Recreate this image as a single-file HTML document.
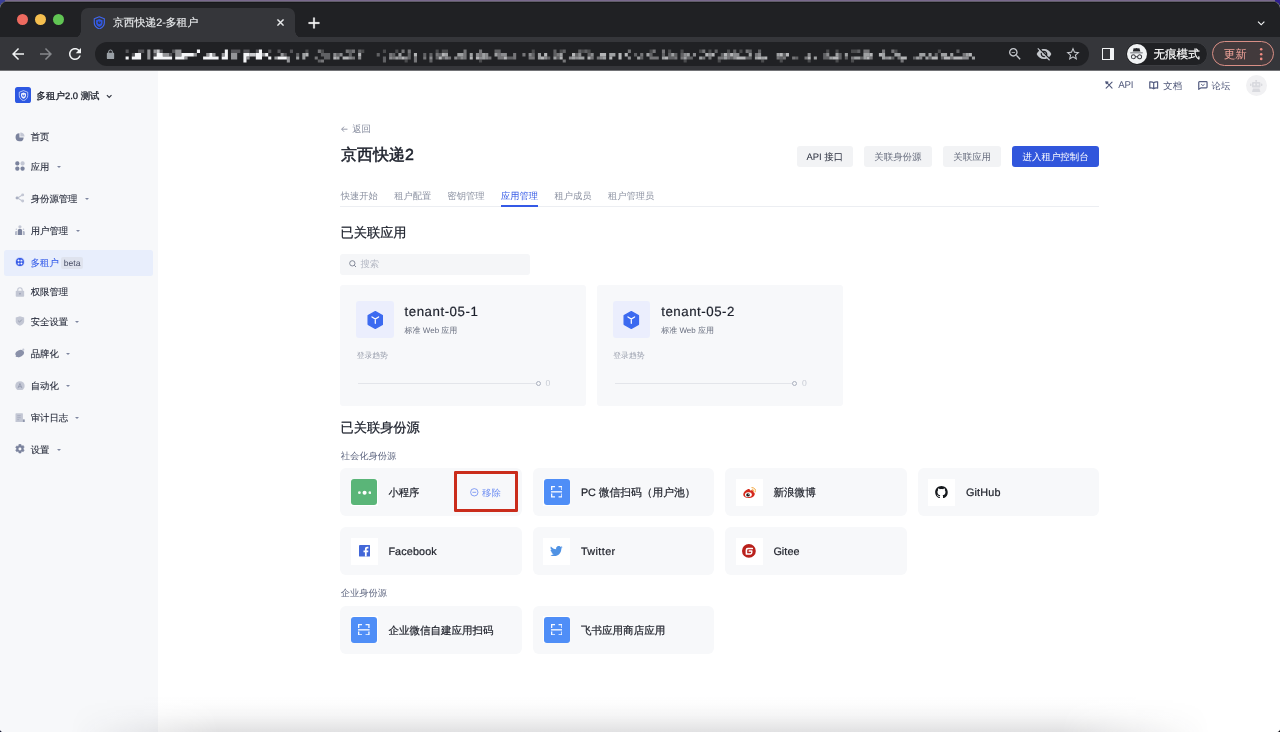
<!DOCTYPE html>
<html lang="zh">
<head>
<meta charset="utf-8">
<title>京西快递2-多租户</title>
<style>
*{box-sizing:border-box;margin:0;padding:0}
html,body{width:1280px;height:732px;overflow:hidden}
body{position:relative;text-rendering:geometricPrecision;background:#79698d;font-family:"Liberation Sans",sans-serif;color:#282d3c}
.abs{position:absolute}
.t{position:absolute;white-space:nowrap;line-height:1}
#win{will-change:transform;box-shadow:0 -.8px 0 #58595d;position:absolute;left:0;top:2px;width:1280px;height:730px;background:#fff;border-radius:6px 6px 4px 4px;overflow:hidden}
#strip{position:absolute;left:0;top:0;width:1280px;height:36px;background:#202124;border-top:.8px solid #17181a}
#tool{position:absolute;left:0;top:35px;width:1280px;height:33px;background:#35363a}
#tab{position:absolute;left:80.500px;top:5.500px;width:214.500px;height:30.500px;background:#35363a;border-radius:7px 7px 0 0}
#tab:before,#tab:after{content:"";position:absolute;bottom:0;width:7px;height:7px;background:radial-gradient(circle at 0 0,rgba(53,54,58,0) 6.5px,#35363a 7px)}
#tab:before{left:-7px}
#tab:after{right:-7px;transform:scaleX(-1)}
.dot{position:absolute;margin-left:.3px;top:12px;width:11px;height:11px;border-radius:50%}
#url{position:absolute;left:95px;top:39.500px;width:993.500px;height:24.500px;border-radius:12.500px;background:#202124}
#page{position:absolute;left:0;top:68px;width:1280px;height:662px;background:#fff}
#side{position:absolute;left:0;top:0;width:158px;height:662px;background:#f7f8fa}
.mi{position:absolute;margin-top:.1px;left:30.700px;font-size:9.350px;-webkit-text-stroke:.12px;color:#282d3c;white-space:nowrap;line-height:12px;height:12px}
.car{position:absolute;width:0;height:0;border-left:2.400px solid transparent;border-right:2.400px solid transparent;border-top:2.800px solid #7f869f}
.ic{position:absolute;margin-top:-.3px;left:15px;width:9.900px;height:9.900px}
.btn{position:absolute;top:75.700px;height:21.500px;border-radius:3px;background:#f2f3f5;font-size:9.450px;line-height:21.200px;padding-top:.9px;text-align:center;color:#676d7e;white-space:nowrap}
.tab{position:absolute;top:119.900px;font-size:9.250px;line-height:12px;color:#8a90a0;white-space:nowrap}
.h2{position:absolute;margin-top:.7px;left:340.600px;font-size:13.200px;font-weight:500;-webkit-text-stroke:.25px #1d212c;color:#1d212c;line-height:16px;white-space:nowrap}
.sub{position:absolute;left:340.800px;font-size:9.250px;color:#5f6781;line-height:12px;white-space:nowrap}
.app{position:absolute;top:215.100px;width:245.500px;height:121px;background:#f7f8fa;border-radius:3px}
.idp{position:absolute;width:181.600px;height:48px;background:#f7f8fa;border-radius:6px}
.idp .ib{position:absolute;left:10.300px;top:10.400px;width:27px;height:27px;background:#fff}
.idp .ib i{position:absolute;left:.600px;top:.600px;right:.600px;bottom:.600px;border-radius:3px}
.idp .nm{position:absolute;left:48.100px;top:17.900px;font-size:10.350px;line-height:14px;color:#23262f;font-weight:500;-webkit-text-stroke:.22px #23262f;white-space:nowrap}
</style>
</head>
<body>
<div class="abs" style="left:0;top:0;width:5px;height:5px;background:#3a3f9a"></div><div class="abs" style="right:0;top:0;width:5px;height:5px;background:#2e1f8f"></div><div class="abs" style="left:0;bottom:0;width:6px;height:6px;background:#1c1f38"></div><div class="abs" style="right:0;bottom:0;width:6px;height:6px;background:#0e0e16"></div>
<div id="win">

  <div id="strip"></div>
  <div id="tool"></div>
  <div id="tab"></div>
  <div class="dot" style="left:16.500px;background:#ee6a5f"></div>
  <div class="dot" style="left:34.500px;background:#f5bf4f"></div>
  <div class="dot" style="left:52.500px;background:#61c554"></div>
  <div class="t" style="left:113px;top:15.200px;font-size:10.800px;color:#eceef0;line-height:12px;font-weight:500;-webkit-text-stroke:.15px #eceef0">京西快递2-多租户</div>
  <svg class="abs" style="left:92.500px;top:13.800px" width="12.600" height="13.500" viewBox="0 0 14 15"><path d="M7 .8 12.600 3.100v4.400c0 3.300-2.300 5.600-5.600 6.900C3.700 13.100 1.400 10.800 1.400 7.500V3.100z" fill="none" stroke="#3f66f0" stroke-width="1.300" stroke-linejoin="round"/><path d="M7 3.300 10.600 4.700v3c0 2.100-1.500 3.600-3.600 4.500-2.100-.9-3.600-2.400-3.600-4.500v-3z" fill="#2f56e0"/><circle cx="7" cy="7.300" r="1.700" fill="#35363a"/><rect x="6.500" y="5" width="1" height="2.400" fill="#2f56e0"/></svg>
  <svg class="abs" style="left:275px;top:14.700px" width="11" height="11" viewBox="0 0 24 24" fill="#f1f3f4" stroke="#f1f3f4" stroke-width="1.200"><path d="M19 6.410 17.590 5 12 10.590 6.410 5 5 6.410 10.590 12 5 17.590 6.410 19 12 13.410 17.590 19 19 17.590 13.410 12z"/></svg>
  <svg class="abs" style="left:306.300px;top:12.700px" width="16" height="16" viewBox="0 0 24 24" fill="#fff" stroke="#fff" stroke-width=".6"><path d="M20 13h-7v7h-2v-7H4v-2h7V4h2v7h7z"/></svg>
  <svg class="abs" style="left:1254px;top:13.500px" width="14.400" height="14.400" viewBox="0 0 24 24" fill="#f1f3f4"><path d="M16.590 8.590 12 13.170 7.410 8.590 6 10l6 6 6-6z"/></svg>
  <svg class="abs" style="left:8.800px;top:42.600px" width="18" height="18" viewBox="0 0 24 24" fill="#f1f3f4"><path d="M20 11H7.830l5.590-5.590L12 4l-8 8 8 8 1.410-1.410L7.830 13H20z"/></svg>
  <svg class="abs" style="left:37.400px;top:42.600px" width="18" height="18" viewBox="0 0 24 24" fill="#86888c"><path d="M12 4l-1.410 1.410L16.170 11H4v2h12.170l-5.580 5.590L12 20l8-8z"/></svg>
  <svg class="abs" style="left:66px;top:42.900px" width="18" height="18" viewBox="0 0 24 24" fill="#f1f3f4"><path d="M17.650 6.350C16.200 4.900 14.210 4 12 4c-4.420 0-7.990 3.580-7.990 8s3.570 8 7.990 8c3.730 0 6.840-2.550 7.730-6h-2.080c-.820 2.330-3.040 4-5.650 4-3.310 0-6-2.690-6-6s2.690-6 6-6c1.660 0 3.140.690 4.220 1.780L13 11h7V4z"/></svg>
  <div id="url">
    <svg class="abs" style="left:9.600px;top:7.300px" width="11" height="11" viewBox="0 0 24 24" fill="#9aa0a6"><path d="M18 8h-1V6c0-2.760-2.240-5-5-5S7 3.240 7 6v2H6c-1.100 0-2 .9-2 2v10c0 1.100.9 2 2 2h12c1.100 0 2-.9 2-2V10c0-1.100-.9-2-2-2zM9 6c0-1.660 1.340-3 3-3s3 1.340 3 3v2H9z"/></svg>
    <svg class="abs" style="left:0;top:0" width="994" height="25" viewBox="0 0 994 25" fill="#f4f5f7"><path fill-opacity="0.2" d="M210.4 7.5h3.1v3.5h-3.1zM225.9 7.5h3.1v3.5h-3.1zM266.2 7.5h3.1v3.5h-3.1zM287.9 7.5h3.1v3.5h-3.1zM300.3 7.5h3.1v3.5h-3.1zM309.6 17.5h3.1v3.1h-3.1zM340.6 7.5h3.1v3.5h-3.1zM346.8 7.5h3.1v3.5h-3.1zM349.9 7.5h3.1v3.5h-3.1zM384.0 17.5h3.1v3.1h-3.1zM436.7 7.5h3.1v3.5h-3.1zM464.6 7.5h3.1v3.5h-3.1zM486.3 7.5h3.1v3.5h-3.1zM492.5 7.5h3.1v3.5h-3.1zM554.5 7.5h3.1v3.5h-3.1zM573.1 7.5h3.1v3.5h-3.1zM585.5 7.5h3.1v3.5h-3.1zM588.6 17.5h3.1v3.1h-3.1zM604.1 7.5h3.1v3.5h-3.1zM613.4 7.5h3.1v3.5h-3.1zM622.7 17.5h3.1v3.1h-3.1zM632.0 7.5h3.1v3.5h-3.1zM644.4 7.5h3.1v3.5h-3.1zM666.1 17.5h3.1v3.1h-3.1zM684.7 17.5h3.1v3.1h-3.1zM712.6 17.5h3.1v3.1h-3.1zM731.2 7.5h3.1v3.5h-3.1zM740.5 7.5h3.1v3.5h-3.1zM740.5 17.5h3.1v3.1h-3.1zM756.0 7.5h3.1v3.5h-3.1zM756.0 17.5h3.1v3.1h-3.1zM759.1 7.5h3.1v3.5h-3.1zM799.4 7.5h3.1v3.5h-3.1zM842.8 7.5h3.1v3.5h-3.1z"/><path fill-opacity="0.25" d="M30.6 7.5h3.1v3.5h-3.1zM36.8 11.0h3.1v3.5h-3.1zM43.0 7.5h3.1v3.5h-3.1zM46.1 7.5h3.1v3.5h-3.1zM58.5 11.0h3.1v3.5h-3.1zM64.7 7.5h3.1v3.5h-3.1zM74.0 11.0h3.1v3.5h-3.1zM77.1 7.5h3.1v3.5h-3.1zM136.0 7.5h3.1v3.5h-3.1zM139.1 7.5h3.1v3.5h-3.1zM142.2 7.5h3.1v3.5h-3.1zM148.4 7.5h3.1v3.5h-3.1zM151.5 7.5h3.1v3.5h-3.1zM160.8 7.5h3.1v3.5h-3.1zM173.2 7.5h3.1v3.5h-3.1zM182.5 7.5h3.1v3.5h-3.1zM188.7 11.0h3.1v3.5h-3.1zM194.9 7.5h3.1v3.5h-3.1z"/><path fill-opacity="0.3" d="M201.1 11.0h3.1v3.5h-3.1zM222.8 17.5h3.1v3.1h-3.1zM225.9 11.0h3.1v3.5h-3.1zM229.0 11.0h3.1v3.5h-3.1zM229.0 14.5h3.1v3.1h-3.1zM232.1 11.0h3.1v3.5h-3.1zM232.1 14.5h3.1v3.1h-3.1zM241.4 11.0h3.1v3.5h-3.1zM253.8 7.5h3.1v3.5h-3.1zM253.8 11.0h3.1v3.5h-3.1zM263.1 7.5h3.1v3.5h-3.1zM281.7 11.0h3.1v3.5h-3.1zM287.9 14.5h3.1v3.1h-3.1zM287.9 17.5h3.1v3.1h-3.1zM297.2 11.0h3.1v3.5h-3.1zM312.7 11.0h3.1v3.5h-3.1zM312.7 14.5h3.1v3.1h-3.1zM328.2 11.0h3.1v3.5h-3.1zM334.4 11.0h3.1v3.5h-3.1zM334.4 17.5h3.1v3.1h-3.1zM340.6 14.5h3.1v3.1h-3.1zM343.7 11.0h3.1v3.5h-3.1zM346.8 14.5h3.1v3.1h-3.1zM362.3 14.5h3.1v3.1h-3.1zM399.5 7.5h3.1v3.5h-3.1zM402.6 7.5h3.1v3.5h-3.1zM411.9 14.5h3.1v3.1h-3.1zM415.0 14.5h3.1v3.1h-3.1zM436.7 11.0h3.1v3.5h-3.1zM452.2 14.5h3.1v3.1h-3.1zM458.4 7.5h3.1v3.5h-3.1zM458.4 11.0h3.1v3.5h-3.1zM461.5 14.5h3.1v3.1h-3.1zM467.7 7.5h3.1v3.5h-3.1zM480.1 11.0h3.1v3.5h-3.1zM483.2 7.5h3.1v3.5h-3.1zM489.4 7.5h3.1v3.5h-3.1zM492.5 11.0h3.1v3.5h-3.1zM539.0 11.0h3.1v3.5h-3.1zM545.2 14.5h3.1v3.1h-3.1zM554.5 11.0h3.1v3.5h-3.1zM566.9 11.0h3.1v3.5h-3.1zM573.1 11.0h3.1v3.5h-3.1zM573.1 14.5h3.1v3.1h-3.1zM576.2 14.5h3.1v3.1h-3.1zM579.3 11.0h3.1v3.5h-3.1zM585.5 11.0h3.1v3.5h-3.1zM591.7 14.5h3.1v3.1h-3.1zM594.8 14.5h3.1v3.1h-3.1zM619.6 7.5h3.1v3.5h-3.1zM625.8 11.0h3.1v3.5h-3.1zM635.1 14.5h3.1v3.1h-3.1zM638.2 7.5h3.1v3.5h-3.1zM650.6 14.5h3.1v3.1h-3.1zM653.7 7.5h3.1v3.5h-3.1zM653.7 14.5h3.1v3.1h-3.1zM663.0 7.5h3.1v3.5h-3.1zM684.7 14.5h3.1v3.1h-3.1zM687.8 11.0h3.1v3.5h-3.1zM700.2 14.5h3.1v3.1h-3.1zM728.1 11.0h3.1v3.5h-3.1zM728.1 14.5h3.1v3.1h-3.1zM731.2 14.5h3.1v3.1h-3.1zM743.6 11.0h3.1v3.5h-3.1zM743.6 14.5h3.1v3.1h-3.1zM749.8 14.5h3.1v3.1h-3.1zM762.2 7.5h3.1v3.5h-3.1zM765.3 14.5h3.1v3.1h-3.1zM796.3 14.5h3.1v3.1h-3.1zM818.0 14.5h3.1v3.1h-3.1zM833.5 14.5h3.1v3.1h-3.1zM839.7 11.0h3.1v3.5h-3.1zM845.9 14.5h3.1v3.1h-3.1zM861.4 7.5h3.1v3.5h-3.1z"/><path fill-opacity="0.4" d="M219.7 14.5h3.1v3.1h-3.1zM222.8 7.5h3.1v3.5h-3.1zM225.9 17.5h3.1v3.1h-3.1zM250.7 7.5h3.1v3.5h-3.1zM256.9 7.5h3.1v3.5h-3.1zM256.9 14.5h3.1v3.1h-3.1zM294.1 11.0h3.1v3.5h-3.1zM297.2 14.5h3.1v3.1h-3.1zM306.5 7.5h3.1v3.5h-3.1zM312.7 7.5h3.1v3.5h-3.1zM318.9 14.5h3.1v3.1h-3.1zM318.9 17.5h3.1v3.1h-3.1zM328.2 14.5h3.1v3.1h-3.1zM340.6 11.0h3.1v3.5h-3.1zM353.0 14.5h3.1v3.1h-3.1zM368.5 7.5h3.1v3.5h-3.1zM368.5 11.0h3.1v3.5h-3.1zM368.5 14.5h3.1v3.1h-3.1zM384.0 7.5h3.1v3.5h-3.1zM384.0 11.0h3.1v3.5h-3.1zM393.3 14.5h3.1v3.1h-3.1zM402.6 11.0h3.1v3.5h-3.1zM402.6 14.5h3.1v3.1h-3.1zM405.7 14.5h3.1v3.1h-3.1zM418.1 11.0h3.1v3.5h-3.1zM418.1 14.5h3.1v3.1h-3.1zM427.4 11.0h3.1v3.5h-3.1zM433.6 14.5h3.1v3.1h-3.1zM436.7 14.5h3.1v3.1h-3.1zM461.5 11.0h3.1v3.5h-3.1zM467.7 17.5h3.1v3.1h-3.1zM495.6 14.5h3.1v3.1h-3.1zM501.8 14.5h3.1v3.1h-3.1zM532.8 7.5h3.1v3.5h-3.1zM545.2 11.0h3.1v3.5h-3.1zM554.5 14.5h3.1v3.1h-3.1zM557.6 7.5h3.1v3.5h-3.1zM557.6 14.5h3.1v3.1h-3.1zM560.7 14.5h3.1v3.1h-3.1zM566.9 7.5h3.1v3.5h-3.1zM579.3 14.5h3.1v3.1h-3.1zM585.5 14.5h3.1v3.1h-3.1zM607.2 7.5h3.1v3.5h-3.1zM607.2 14.5h3.1v3.1h-3.1zM613.4 14.5h3.1v3.1h-3.1zM622.7 14.5h3.1v3.1h-3.1zM625.8 14.5h3.1v3.1h-3.1zM632.0 11.0h3.1v3.5h-3.1zM632.0 14.5h3.1v3.1h-3.1zM650.6 7.5h3.1v3.5h-3.1zM659.9 11.0h3.1v3.5h-3.1zM681.6 14.5h3.1v3.1h-3.1zM687.8 14.5h3.1v3.1h-3.1zM697.1 14.5h3.1v3.1h-3.1zM709.5 14.5h3.1v3.1h-3.1zM756.0 14.5h3.1v3.1h-3.1zM768.4 7.5h3.1v3.5h-3.1zM771.5 7.5h3.1v3.5h-3.1zM774.6 14.5h3.1v3.1h-3.1zM787.0 7.5h3.1v3.5h-3.1zM796.3 7.5h3.1v3.5h-3.1zM802.5 14.5h3.1v3.1h-3.1zM805.6 17.5h3.1v3.1h-3.1zM855.2 14.5h3.1v3.1h-3.1zM867.6 11.0h3.1v3.5h-3.1z"/><path fill-opacity="0.5" d="M238.3 11.0h3.1v3.5h-3.1zM244.5 11.0h3.1v3.5h-3.1zM253.8 14.5h3.1v3.1h-3.1zM263.1 14.5h3.1v3.1h-3.1zM294.1 14.5h3.1v3.1h-3.1zM303.4 14.5h3.1v3.1h-3.1zM309.6 14.5h3.1v3.1h-3.1zM334.4 14.5h3.1v3.1h-3.1zM349.9 14.5h3.1v3.1h-3.1zM359.2 14.5h3.1v3.1h-3.1zM365.4 14.5h3.1v3.1h-3.1zM380.9 11.0h3.1v3.5h-3.1zM384.0 14.5h3.1v3.1h-3.1zM390.2 11.0h3.1v3.5h-3.1zM390.2 14.5h3.1v3.1h-3.1zM405.7 11.0h3.1v3.5h-3.1zM408.8 11.0h3.1v3.5h-3.1zM433.6 11.0h3.1v3.5h-3.1zM449.1 14.5h3.1v3.1h-3.1zM473.9 14.5h3.1v3.1h-3.1zM480.1 14.5h3.1v3.1h-3.1zM483.2 11.0h3.1v3.5h-3.1zM495.6 11.0h3.1v3.5h-3.1zM504.9 14.5h3.1v3.1h-3.1zM532.8 14.5h3.1v3.1h-3.1zM588.6 11.0h3.1v3.5h-3.1zM597.9 11.0h3.1v3.5h-3.1zM613.4 11.0h3.1v3.5h-3.1zM638.2 11.0h3.1v3.5h-3.1zM638.2 14.5h3.1v3.1h-3.1zM641.3 11.0h3.1v3.5h-3.1zM663.0 11.0h3.1v3.5h-3.1zM712.6 11.0h3.1v3.5h-3.1zM731.2 11.0h3.1v3.5h-3.1zM790.1 14.5h3.1v3.1h-3.1zM824.2 14.5h3.1v3.1h-3.1zM867.6 14.5h3.1v3.1h-3.1zM870.7 14.5h3.1v3.1h-3.1z"/><path fill-opacity="0.55" d="M52.3 7.5h3.1v3.5h-3.1zM52.3 11.0h3.1v3.5h-3.1zM52.3 14.5h3.1v3.1h-3.1zM58.5 7.5h3.1v3.5h-3.1zM67.8 11.0h3.1v3.5h-3.1zM70.9 11.0h3.1v3.5h-3.1zM80.2 7.5h3.1v3.5h-3.1zM80.2 11.0h3.1v3.5h-3.1zM83.3 7.5h3.1v3.5h-3.1zM83.3 11.0h3.1v3.5h-3.1zM89.5 14.5h3.1v3.1h-3.1zM98.8 11.0h3.1v3.5h-3.1zM111.2 11.0h3.1v3.5h-3.1zM117.4 11.0h3.1v3.5h-3.1zM126.7 11.0h3.1v3.5h-3.1zM136.0 11.0h3.1v3.5h-3.1zM136.0 14.5h3.1v3.1h-3.1zM139.1 11.0h3.1v3.5h-3.1zM139.1 14.5h3.1v3.1h-3.1zM151.5 14.5h3.1v3.1h-3.1zM167.0 11.0h3.1v3.5h-3.1zM179.4 14.5h3.1v3.1h-3.1zM185.6 11.0h3.1v3.5h-3.1zM191.8 14.5h3.1v3.1h-3.1zM191.8 17.5h3.1v3.1h-3.1z"/><path fill-opacity="0.6" d="M201.1 14.5h3.1v3.1h-3.1zM207.3 11.0h3.1v3.5h-3.1zM207.3 14.5h3.1v3.1h-3.1zM241.4 14.5h3.1v3.1h-3.1zM300.3 14.5h3.1v3.1h-3.1zM303.4 11.0h3.1v3.5h-3.1zM349.9 11.0h3.1v3.5h-3.1zM362.3 11.0h3.1v3.5h-3.1zM365.4 11.0h3.1v3.5h-3.1zM374.7 11.0h3.1v3.5h-3.1zM387.1 11.0h3.1v3.5h-3.1zM387.1 14.5h3.1v3.1h-3.1zM399.5 11.0h3.1v3.5h-3.1zM442.9 11.0h3.1v3.5h-3.1zM442.9 14.5h3.1v3.1h-3.1zM458.4 14.5h3.1v3.1h-3.1zM464.6 11.0h3.1v3.5h-3.1zM477.0 14.5h3.1v3.1h-3.1zM483.2 14.5h3.1v3.1h-3.1zM486.3 14.5h3.1v3.1h-3.1zM508.0 14.5h3.1v3.1h-3.1zM514.2 11.0h3.1v3.5h-3.1zM517.3 11.0h3.1v3.5h-3.1zM542.1 14.5h3.1v3.1h-3.1zM551.4 11.0h3.1v3.5h-3.1zM566.9 14.5h3.1v3.1h-3.1zM576.2 11.0h3.1v3.5h-3.1zM588.6 14.5h3.1v3.1h-3.1zM591.7 11.0h3.1v3.5h-3.1zM604.1 14.5h3.1v3.1h-3.1zM628.9 14.5h3.1v3.1h-3.1zM653.7 11.0h3.1v3.5h-3.1zM659.9 14.5h3.1v3.1h-3.1zM666.1 14.5h3.1v3.1h-3.1zM681.6 11.0h3.1v3.5h-3.1zM718.8 14.5h3.1v3.1h-3.1zM734.3 14.5h3.1v3.1h-3.1zM740.5 11.0h3.1v3.5h-3.1zM749.8 11.0h3.1v3.5h-3.1zM759.1 14.5h3.1v3.1h-3.1zM762.2 14.5h3.1v3.1h-3.1zM768.4 11.0h3.1v3.5h-3.1zM768.4 14.5h3.1v3.1h-3.1zM771.5 11.0h3.1v3.5h-3.1zM787.0 11.0h3.1v3.5h-3.1zM787.0 14.5h3.1v3.1h-3.1zM793.2 14.5h3.1v3.1h-3.1zM799.4 11.0h3.1v3.5h-3.1zM802.5 11.0h3.1v3.5h-3.1zM821.1 14.5h3.1v3.1h-3.1zM824.2 11.0h3.1v3.5h-3.1zM827.3 11.0h3.1v3.5h-3.1zM830.4 14.5h3.1v3.1h-3.1zM833.5 11.0h3.1v3.5h-3.1zM845.9 11.0h3.1v3.5h-3.1zM849.0 11.0h3.1v3.5h-3.1zM855.2 11.0h3.1v3.5h-3.1zM870.7 11.0h3.1v3.5h-3.1zM876.9 14.5h3.1v3.1h-3.1z"/><path fill-opacity="0.7" d="M210.4 11.0h3.1v3.5h-3.1zM238.3 14.5h3.1v3.1h-3.1zM247.6 14.5h3.1v3.1h-3.1zM250.7 14.5h3.1v3.1h-3.1zM263.1 11.0h3.1v3.5h-3.1zM306.5 14.5h3.1v3.1h-3.1zM318.9 11.0h3.1v3.5h-3.1zM343.7 14.5h3.1v3.1h-3.1zM346.8 11.0h3.1v3.5h-3.1zM374.7 14.5h3.1v3.1h-3.1zM380.9 14.5h3.1v3.1h-3.1zM408.8 14.5h3.1v3.1h-3.1zM446.0 14.5h3.1v3.1h-3.1zM449.1 11.0h3.1v3.5h-3.1zM464.6 14.5h3.1v3.1h-3.1zM477.0 11.0h3.1v3.5h-3.1zM492.5 14.5h3.1v3.1h-3.1zM504.9 11.0h3.1v3.5h-3.1zM508.0 11.0h3.1v3.5h-3.1zM514.2 14.5h3.1v3.1h-3.1zM523.5 11.0h3.1v3.5h-3.1zM523.5 14.5h3.1v3.1h-3.1zM529.7 11.0h3.1v3.5h-3.1zM570.0 14.5h3.1v3.1h-3.1zM610.3 11.0h3.1v3.5h-3.1zM616.5 11.0h3.1v3.5h-3.1zM628.9 11.0h3.1v3.5h-3.1zM635.1 11.0h3.1v3.5h-3.1zM641.3 14.5h3.1v3.1h-3.1zM644.4 14.5h3.1v3.1h-3.1zM647.5 14.5h3.1v3.1h-3.1zM663.0 14.5h3.1v3.1h-3.1zM669.2 14.5h3.1v3.1h-3.1zM684.7 11.0h3.1v3.5h-3.1zM690.9 11.0h3.1v3.5h-3.1zM712.6 14.5h3.1v3.1h-3.1zM737.4 14.5h3.1v3.1h-3.1zM740.5 14.5h3.1v3.1h-3.1zM771.5 14.5h3.1v3.1h-3.1zM774.6 11.0h3.1v3.5h-3.1zM783.9 11.0h3.1v3.5h-3.1zM805.6 14.5h3.1v3.1h-3.1zM808.7 14.5h3.1v3.1h-3.1zM836.6 14.5h3.1v3.1h-3.1zM839.7 14.5h3.1v3.1h-3.1zM849.0 14.5h3.1v3.1h-3.1zM852.1 14.5h3.1v3.1h-3.1zM858.3 14.5h3.1v3.1h-3.1zM861.4 14.5h3.1v3.1h-3.1zM864.5 14.5h3.1v3.1h-3.1zM873.8 11.0h3.1v3.5h-3.1z"/><path fill-opacity="0.8" d="M61.6 7.5h3.1v3.5h-3.1zM154.6 11.0h3.1v3.5h-3.1zM157.7 11.0h3.1v3.5h-3.1z"/><path fill-opacity="1.0" d="M30.6 14.5h3.1v3.1h-3.1zM36.8 14.5h3.1v3.1h-3.1zM39.9 11.0h3.1v3.5h-3.1zM39.9 14.5h3.1v3.1h-3.1zM43.0 11.0h3.1v3.5h-3.1zM43.0 14.5h3.1v3.1h-3.1zM58.5 14.5h3.1v3.1h-3.1zM61.6 11.0h3.1v3.5h-3.1zM61.6 14.5h3.1v3.1h-3.1zM64.7 11.0h3.1v3.5h-3.1zM64.7 14.5h3.1v3.1h-3.1zM67.8 14.5h3.1v3.1h-3.1zM70.9 14.5h3.1v3.1h-3.1zM74.0 14.5h3.1v3.1h-3.1zM80.2 14.5h3.1v3.1h-3.1zM83.3 14.5h3.1v3.1h-3.1zM86.4 11.0h3.1v3.5h-3.1zM86.4 14.5h3.1v3.1h-3.1zM89.5 11.0h3.1v3.5h-3.1zM92.6 11.0h3.1v3.5h-3.1zM95.7 11.0h3.1v3.5h-3.1zM101.9 7.5h3.1v3.5h-3.1zM108.1 14.5h3.1v3.1h-3.1zM111.2 14.5h3.1v3.1h-3.1zM114.3 11.0h3.1v3.5h-3.1zM114.3 14.5h3.1v3.1h-3.1zM117.4 14.5h3.1v3.1h-3.1zM120.5 14.5h3.1v3.1h-3.1zM126.7 14.5h3.1v3.1h-3.1zM129.8 7.5h3.1v3.5h-3.1zM129.8 11.0h3.1v3.5h-3.1zM129.8 14.5h3.1v3.1h-3.1zM148.4 11.0h3.1v3.5h-3.1zM148.4 14.5h3.1v3.1h-3.1zM148.4 17.5h3.1v3.1h-3.1zM151.5 11.0h3.1v3.5h-3.1zM160.8 11.0h3.1v3.5h-3.1zM160.8 14.5h3.1v3.1h-3.1zM163.9 7.5h3.1v3.5h-3.1zM163.9 11.0h3.1v3.5h-3.1zM163.9 14.5h3.1v3.1h-3.1zM170.1 11.0h3.1v3.5h-3.1zM173.2 14.5h3.1v3.1h-3.1zM182.5 14.5h3.1v3.1h-3.1zM185.6 14.5h3.1v3.1h-3.1zM188.7 14.5h3.1v3.1h-3.1z"/></svg>
    <svg class="abs" style="left:912px;top:4.300px" width="16" height="16" viewBox="0 0 24 24" fill="#c4c7cc"><path d="M15.500 14h-.790l-.280-.270C15.410 12.590 16 11.110 16 9.500 16 5.910 13.090 3 9.500 3S3 5.910 3 9.500 5.910 16 9.500 16c1.610 0 3.090-.590 4.230-1.570l.270.280v.790l5 4.990L20.490 19zm-6 0C7.010 14 5 11.990 5 9.500S7.010 5 9.500 5 14 7.010 14 9.500 11.990 14 9.500 14zM7 9h5v1.200H7z"/></svg>
    <svg class="abs" style="left:940.800px;top:4.300px" width="16" height="16" viewBox="0 0 24 24" fill="#c4c7cc"><path d="M12 7c2.760 0 5 2.240 5 5 0 .650-.130 1.260-.360 1.830l2.920 2.920c1.510-1.260 2.700-2.890 3.430-4.750-1.730-4.390-6-7.500-11-7.500-1.400 0-2.740.250-3.980.7l2.160 2.160C10.740 7.130 11.350 7 12 7zM2 4.270l2.280 2.280.460.460C3.080 8.300 1.780 10.020 1 12c1.730 4.390 6 7.500 11 7.500 1.550 0 3.030-.3 4.380-.840l.420.420L19.730 22 21 20.730 3.270 3zM7.530 9.800l1.550 1.550c-.050.210-.080.430-.080.650 0 1.660 1.340 3 3 3 .220 0 .440-.030.650-.080l1.550 1.550c-.670.330-1.410.530-2.200.530-2.760 0-5-2.240-5-5 0-.790.200-1.530.530-2.200zm4.310-.780 3.150 3.150.020-.160c0-1.660-1.340-3-3-3z"/></svg>
    <svg class="abs" style="left:969.500px;top:4.300px" width="16" height="16" viewBox="0 0 24 24" fill="#c4c7cc"><path d="M22 9.240l-7.190-.620L12 2 9.190 8.630 2 9.240l5.460 4.730L5.820 21 12 17.270 18.180 21l-1.630-7.030zM12 15.400l-3.760 2.270 1-4.280-3.320-2.880 4.380-.380L12 6.100l1.710 4.040 4.380.380-3.320 2.880 1 4.280z"/></svg>
  </div>
  <div class="abs" style="left:1101.800px;top:45.500px;width:12.400px;height:12.700px;border:1.600px solid #f1f3f4;border-right-width:4.800px;border-radius:.5px"></div>
  <div class="abs" style="left:1124.700px;top:40px;width:83.300px;height:24px;border-radius:12px;background:#202124;border:1px solid #3c3d41"></div>
  <div class="abs" style="left:1126.900px;top:41.800px;width:19.800px;height:19.800px;border-radius:50%;background:#f1f3f4"></div>
  <svg class="abs" style="left:1129px;top:44.400px" width="15" height="15" viewBox="0 0 24 24" fill="#3a3b40"><path d="M7.600 3.200 9.300 4l2.700-.9 2.700.9 1.700-.8 1.900 5.600H6z" fill="#232428"/><path d="M2 9.600h20v2.200H2z" fill="#9a9ca0"/><path d="M7 13a4 4 0 0 1 3.900 3.200h2.200A4 4 0 1 1 13 17.800h-2A4 4 0 1 1 7 13zm0 1.600a2.400 2.400 0 1 0 0 4.800 2.400 2.400 0 0 0 0-4.800zm10 0a2.400 2.400 0 1 0 0 4.800 2.400 2.400 0 0 0 0-4.800z"/></svg>
  <div class="t" style="left:1153.400px;top:45.800px;font-size:11.600px;line-height:14px;color:#fff;font-weight:500;-webkit-text-stroke:.2px #fff">无痕模式</div>
  <div class="abs" style="left:1212px;top:39.100px;width:62px;height:25.400px;border-radius:12.700px;background:#423a3c;border:1.200px solid #d98f86"></div>
  <div class="t" style="left:1223.700px;top:45.900px;font-size:11.500px;line-height:14px;color:#f0a399;font-weight:500">更新</div>
  <svg class="abs" style="left:1258px;top:43.500px" width="6.400" height="17" viewBox="0 0 6.400 17" fill="#f28b82"><circle cx="3.200" cy="3.300" r="1.300"/><circle cx="3.200" cy="8.200" r="1.300"/><circle cx="3.200" cy="12.900" r="1.300"/></svg>

  <div id="page">
    <div id="side">
      <div class="abs" style="left:3.800px;top:180px;width:149.200px;height:25.600px;border-radius:2.500px;background:#e8eefc"></div>
      <div class="abs" style="left:15px;top:17.100px;width:16px;height:16px;border-radius:2.600px;background:#2d58e2"></div>
      <svg class="abs" style="left:17.500px;top:19.500px" width="11" height="11.500" viewBox="0 0 22 23"><path d="M11 1.200 19.500 4.500v6.500c0 5-3.500 8.500-8.500 10.500C6 19.500 2.500 16 2.500 11V4.500z" fill="none" stroke="#fff" stroke-opacity=".75" stroke-width="1.700" stroke-linejoin="round"/><path d="M11 5 16 7v4.200c0 3-2 5.200-5 6.500-3-1.300-5-3.500-5-6.500V7z" fill="#fff" fill-opacity=".9"/><circle cx="11" cy="11" r="2.500" fill="#2d58e2"/><rect x="10.200" y="7.500" width="1.600" height="3.500" fill="#fff"/></svg>
      <div class="t" style="left:36.600px;top:21.200px;font-size:9.450px;line-height:12px;font-weight:500;-webkit-text-stroke:.3px #20242f;color:#20242f">多租户2.0 测试</div>
      <svg class="abs" style="left:106px;top:24px" width="6.400" height="5" viewBox="0 0 6.400 5"><path d="M.9 1.100 3.200 3.500 5.500 1.100" fill="none" stroke="#30343f" stroke-width="1.100"/></svg>
      <svg class="ic" style="top:62.2px" viewBox="0 0 20 20"><path d="M9 2.500A8.200 8.200 0 1 0 17.500 11H9z" fill="#7b839d"/><path d="M10.800 .8A8.200 8.200 0 0 1 19.200 9.200H10.800z" fill="#c3c7d4"/></svg>
      <div class="mi" style="top:61.2px">首页</div>
      <svg class="ic" style="top:91.5px" viewBox="0 0 20 20"><rect x=".5" y=".5" width="8.400" height="8.400" rx="3.800" fill="#7b839d"/><rect x="11.100" y=".5" width="8.400" height="8.400" rx="3.800" fill="#c3c7d4"/><rect x=".5" y="11.100" width="8.400" height="8.400" rx="3.800" fill="#7b839d"/><rect x="11.100" y="11.100" width="8.400" height="8.400" rx="3.800" fill="#7b839d"/></svg>
      <div class="mi" style="top:90.5px">应用</div>
      <div class="car" style="left:56.7px;top:95.5px"></div>
      <svg class="ic" style="top:123.5px" viewBox="0 0 20 20"><path d="M15 4 5 10l10 6" fill="none" stroke="#c3c7d4" stroke-width="2.200"/><circle cx="15.500" cy="3.800" r="3" fill="#c3c7d4"/><circle cx="4.200" cy="10" r="3" fill="#aab0c2"/><circle cx="15.500" cy="16.200" r="3" fill="#c3c7d4"/></svg>
      <div class="mi" style="top:122.5px">身份源管理</div>
      <div class="car" style="left:84.7px;top:127.5px"></div>
      <svg class="ic" style="top:155.6px" viewBox="0 0 20 20"><circle cx="10" cy="3.600" r="3.200" fill="#c3c7d4"/><path d="M5.500 20v-8a4.500 4.500 0 0 1 9 0v8z" fill="#7b839d"/><path d="M.5 20v-5.500a2.500 2.500 0 0 1 3-2.400V20zM19.500 20v-5.500a2.500 2.500 0 0 0-3-2.400V20z" fill="#a0a7bb"/><circle cx="2.800" cy="8.500" r="1.600" fill="#c3c7d4"/><circle cx="17.200" cy="8.500" r="1.600" fill="#c3c7d4"/></svg>
      <div class="mi" style="top:154.6px">用户管理</div>
      <div class="car" style="left:75.5px;top:159.6px"></div>
      <svg class="ic" style="top:187.7px" viewBox="0 0 20 20"><circle cx="10" cy="10" r="9.800" fill="#c9d4fa"/><circle cx="10" cy="10" r="8" fill="#2f55e6"/><circle cx="7.200" cy="7.200" r="2.100" fill="#fff"/><path d="M11 5.500h4v3.500h-4zM5.500 11.500h3.500v3.500H5.500z" fill="#e6ebff"/><circle cx="13" cy="13" r="2" fill="#fff"/></svg>
      <div class="mi" style="top:186.7px;color:#3960ea">多租户</div>
      <svg class="ic" style="top:217.2px" viewBox="0 0 20 20"><path d="M5.500 8V6a4.500 4.500 0 0 1 9 0v2" fill="none" stroke="#c3c7d4" stroke-width="2.200"/><rect x="1.500" y="7.500" width="17" height="12" rx="1.500" fill="#c3c7d4"/><rect x="9" y="11.500" width="2" height="4" rx="1" fill="#8f96ac"/></svg>
      <div class="mi" style="top:216.2px">权限管理</div>
      <svg class="ic" style="top:246.7px" viewBox="0 0 20 20"><path d="M10 .5 18.500 3v7.500c0 4.500-3.500 7.500-8.500 9.200C5 18 1.500 15 1.500 10.500V3z" fill="#c3c7d4"/><path d="M6.300 9.500 9.200 12.300 13.800 7.300" fill="none" stroke="#8f96ac" stroke-width="1.800"/></svg>
      <div class="mi" style="top:245.7px">安全设置</div>
      <div class="car" style="left:75.3px;top:250.7px"></div>
      <svg class="ic" style="top:278.6px" viewBox="0 0 20 20"><ellipse cx="9.500" cy="11" rx="9" ry="6.800" transform="rotate(-25 9.500 11)" fill="#8a91a9"/><circle cx="16.800" cy="3.300" r="2.200" fill="#c3c7d4"/><path d="M.5 17.500 6 14l3 4.500z" fill="#8a91a9"/></svg>
      <div class="mi" style="top:277.6px">品牌化</div>
      <div class="car" style="left:66.0px;top:282.6px"></div>
      <svg class="ic" style="top:310.8px" viewBox="0 0 20 20"><circle cx="10" cy="10" r="9.500" fill="#c3c7d4"/><path d="M6 14.500 10 5l4 9.500M7.500 11.500h5" fill="none" stroke="#9299ae" stroke-width="1.700"/></svg>
      <div class="mi" style="top:309.8px">自动化</div>
      <div class="car" style="left:66.0px;top:314.8px"></div>
      <svg class="ic" style="top:342.8px" viewBox="0 0 20 20"><path d="M1 1.500A1 1 0 0 1 2 .5h13a1 1 0 0 1 1 1V13h3.500v4a2.500 2.500 0 0 1-2.500 2.500H3.500A2.500 2.500 0 0 1 1 17z" fill="#c3c7d4"/><path d="M4.500 5.500h7M4.500 9.500h7M4.500 13.500h4" stroke="#a3a9bc" stroke-width="1.600"/><path d="M16 13h3.500v4a1.750 1.750 0 0 1-3.500 0z" fill="#8f96ac"/></svg>
      <div class="mi" style="top:341.8px">审计日志</div>
      <div class="car" style="left:75.3px;top:346.8px"></div>
      <svg class="ic" style="top:374.7px" viewBox="0 0 20 20"><path d="M8 .5h4l.7 2.700 1.300.8 2.700-.8 2 3.500-2 1.900v1.600l2 1.900-2 3.500-2.700-.8-1.300.8-.7 2.700H8l-.7-2.700-1.300-.8-2.700.8-2-3.500 2-1.900V9.200l-2-1.900 2-3.500 2.700.8 1.300-.8z" fill="#7b839d" stroke="#7b839d" stroke-width="1" stroke-linejoin="round"/><circle cx="10" cy="10" r="3" fill="#f7f8fa"/></svg>
      <div class="mi" style="top:373.7px">设置</div>
      <div class="car" style="left:56.8px;top:378.7px"></div>
      <div class="abs" style="left:61.200px;top:186.700px;width:21.800px;height:12.600px;border-radius:2px;background:#dfe3ee;font-size:8.600px;line-height:12.400px;text-align:center;color:#4a5068">beta</div>
    </div>
    <div class="abs" style="left:0;top:0;width:1280px;height:1px;background:#727376"></div>
    <svg class="abs" style="left:1105px;top:11.2px" width="8.200" height="8.200" viewBox="0 0 18 18"><path d="M3 2.500 15.500 15.500M15.500 2.500 10 8.200M2.500 15.500l5-5M1.500 1.500 6.500 2.500 3 6z" fill="none" stroke="#4f577a" stroke-width="2.400" stroke-linecap="round" stroke-linejoin="round"/></svg>
    <div class="t" style="left:1118.300px;top:9.5px;font-size:9.750px;letter-spacing:-.3px;line-height:12px;color:#525a7c">API</div>
    <svg class="abs" style="left:1149.200px;top:11.1px" width="9.400" height="8.800" viewBox="0 0 19 18"><path d="M9.500 3.500C7.500 2 4.500 1.500 1.500 2v12.500c3-.5 6 0 8 1.500 2-1.500 5-2 8-1.500V2c-3-.5-6 0-8 1.500zM9.500 3.500V16" fill="none" stroke="#565e82" stroke-width="2.500" stroke-linejoin="round"/></svg>
    <div class="t" style="left:1163.300px;top:10.4px;font-size:9.400px;line-height:12px;color:#4d5577">文档</div>
    <svg class="abs" style="left:1198px;top:11.1px" width="9.800" height="9" viewBox="0 0 20 18.400"><path d="M3 1.500h14a1.500 1.500 0 0 1 1.500 1.500v9.500A1.500 1.500 0 0 1 17 14H6.500L1.500 17V3A1.500 1.500 0 0 1 3 1.500z" fill="none" stroke="#565e82" stroke-width="2.500" stroke-linejoin="round"/><path d="M6.500 6.500 10 9.500 13.500 6.500" fill="none" stroke="#565e82" stroke-width="2"/></svg>
    <div class="t" style="left:1211.600px;top:10.4px;font-size:9.400px;line-height:12px;color:#4d5577">论坛</div>
    <div class="abs" style="left:1246px;top:5.0px;width:21px;height:21px;border-radius:50%;background:#f1f1f3"></div>
    <svg class="abs" style="left:1250.300px;top:9.5px" width="12.400" height="12" viewBox="0 0 25 24" fill="#d9dadf"><rect x="11.500" y="0" width="2" height="4"/><circle cx="12.500" cy="1.500" r="1.800"/><rect x="4" y="4" width="17" height="11" rx="2"/><rect x="0" y="7" width="3" height="5" rx="1"/><rect x="22" y="7" width="3" height="5" rx="1"/><circle cx="9" cy="9" r="1.800" fill="#f1f1f3"/><circle cx="16" cy="9" r="1.800" fill="#f1f1f3"/><path d="M6 17h13l2 7H4z"/></svg>
    <svg class="abs" style="left:340.500px;top:55.8px" width="7" height="6.400" viewBox="0 0 15 14"><path d="M14 7H1.500M6.500 1.500 1.200 7l5.300 5.500" fill="none" stroke="#868c9e" stroke-width="1.900"/></svg>
    <div class="t" style="left:352.200px;top:52.8px;font-size:9.400px;line-height:12px;color:#868c9e">返回</div>
    <div class="t" style="left:341px;top:75.9px;font-size:16px;line-height:20px;font-weight:500;-webkit-text-stroke:.5px #1d212c;color:#1d212c">京西快递2</div>
    <div class="btn" style="left:796.6px;width:56.4px;color:#282d3c">API 接口</div>
    <div class="btn" style="left:864.0px;width:67.8px;">关联身份源</div>
    <div class="btn" style="left:943.0px;width:58.3px;">关联应用</div>
    <div class="btn" style="left:1012.2px;width:86.9px;background:#3156dc;color:#fff">进入租户控制台</div>
    <div class="tab" style="left:340.8px">快速开始</div>
    <div class="tab" style="left:394.2px">租户配置</div>
    <div class="tab" style="left:447.6px">密钥管理</div>
    <div class="tab" style="left:501.0px;color:#3459e6">应用管理</div>
    <div class="tab" style="left:554.6px">租户成员</div>
    <div class="tab" style="left:607.9px">租户管理员</div>
    <div class="abs" style="left:340px;top:136.2px;width:759px;height:1px;background:#eceef2"></div>
    <div class="abs" style="left:500.600px;top:135.2px;width:37.300px;height:1.500px;background:#3459e6"></div>
    <div class="h2" style="top:154.5px">已关联应用</div>
    <div class="abs" style="left:340.300px;top:183.5px;width:189.700px;height:21px;border-radius:3px;background:#f5f6f8"></div>
    <svg class="abs" style="left:348.700px;top:190.3px" width="7.600" height="7.600" viewBox="0 0 16 16"><circle cx="7" cy="7" r="5.600" fill="none" stroke="#656b7e" stroke-width="1.600"/><path d="M11.200 11.200l3.800 3.800" stroke="#656b7e" stroke-width="1.700"/></svg>
    <div class="t" style="left:360.400px;top:188.0px;font-size:9.400px;line-height:12px;color:#b3b7c3">搜索</div>
    <div class="app" style="left:340.4px">
        <div class="abs" style="left:15.700px;top:15.700px;width:37.600px;height:37.600px;border-radius:3px;background:#ebeefd"></div>
        <svg class="abs" style="left:26.200px;top:25.700px" width="16.600" height="18" viewBox="0 0 35 38"><path d="M17.500 1.500 32.500 10v18l-15 8.500-15-8.500V10z" fill="#3c6af0" stroke="#3c6af0" stroke-width="3" stroke-linejoin="round"/><path d="M10.500 12.500 17.500 17l7-4.500M17.500 17v9" fill="none" stroke="#fff" stroke-width="2.600" stroke-linecap="round"/></svg>
        <div class="t" style="left:64.200px;top:19px;font-size:13.300px;letter-spacing:.52px;line-height:16px;color:#1d212c;-webkit-text-stroke:.2px #1d212c">tenant-05-1</div>
        <div class="t" style="left:64.200px;top:39.800px;font-size:8px;line-height:11px;color:#676d7e">标准 Web 应用</div>
        <div class="t" style="left:16.300px;top:65.200px;font-size:7.800px;line-height:11px;color:#9ba0ae">登录趋势</div>
        <div class="abs" style="left:17.600px;top:97.800px;width:178px;height:1px;background:#e3e5ea"></div>
        <div class="abs" style="left:195.200px;top:95.600px;width:5.200px;height:5.200px;border-radius:50%;border:1.200px solid #aab0be;background:#f7f8fa"></div>
        <div class="t" style="left:205px;top:92.800px;font-size:8.600px;line-height:11px;color:#c8ccd5">0</div>
      </div>
    <div class="app" style="left:597.0px">
        <div class="abs" style="left:15.700px;top:15.700px;width:37.600px;height:37.600px;border-radius:3px;background:#ebeefd"></div>
        <svg class="abs" style="left:26.200px;top:25.700px" width="16.600" height="18" viewBox="0 0 35 38"><path d="M17.500 1.500 32.500 10v18l-15 8.500-15-8.500V10z" fill="#3c6af0" stroke="#3c6af0" stroke-width="3" stroke-linejoin="round"/><path d="M10.500 12.500 17.500 17l7-4.500M17.500 17v9" fill="none" stroke="#fff" stroke-width="2.600" stroke-linecap="round"/></svg>
        <div class="t" style="left:64.200px;top:19px;font-size:13.300px;letter-spacing:.52px;line-height:16px;color:#1d212c;-webkit-text-stroke:.2px #1d212c">tenant-05-2</div>
        <div class="t" style="left:64.200px;top:39.800px;font-size:8px;line-height:11px;color:#676d7e">标准 Web 应用</div>
        <div class="t" style="left:16.300px;top:65.200px;font-size:7.800px;line-height:11px;color:#9ba0ae">登录趋势</div>
        <div class="abs" style="left:17.600px;top:97.800px;width:178px;height:1px;background:#e3e5ea"></div>
        <div class="abs" style="left:195.200px;top:95.600px;width:5.200px;height:5.200px;border-radius:50%;border:1.200px solid #aab0be;background:#f7f8fa"></div>
        <div class="t" style="left:205px;top:92.800px;font-size:8.600px;line-height:11px;color:#c8ccd5">0</div>
      </div>
    <div class="h2" style="top:349.8px">已关联身份源</div>
    <div class="sub" style="top:380.0px">社会化身份源</div>
    <div class="sub" style="top:517.4px">企业身份源</div>
    <div class="idp" style="left:340.3px;top:398.4px"><div class="ib"><i style="background:#5ab578"></i></div><svg class="abs" style="left:16.500px;top:21.400px" width="14.600" height="5.200" viewBox="0 0 29.200 10.400" fill="#fff"><circle cx="4.800" cy="5.400" r="2.800" fill-opacity=".9"/><circle cx="15.200" cy="5.400" r="4.100"/><circle cx="25.800" cy="5.400" r="2.800" fill-opacity=".9"/></svg><div class="nm" style="top:18.900px">小程序</div></div>
    <div class="idp" style="left:532.8px;top:398.4px"><div class="ib"><i style="background:#4f8ef7"></i></div><svg class="abs" style="left:17.800px;top:17.800px" width="11.600" height="11.600" viewBox="0 0 23 23" fill="none" stroke="#fff" stroke-width="2.600"><path d="M1.300 8V1.300H8M15 1.300h6.700V8M21.700 15v6.700H15M8 21.700H1.300V15" stroke-opacity=".95"/><path d="M0 11.500h23" stroke-width="3.200" stroke-opacity=".8"/></svg><div class="nm" style="top:17.500px;font-size:10.750px">PC 微信扫码（用户池）</div></div>
    <div class="idp" style="left:725.3px;top:398.4px"><div class="ib"></div><svg class="abs" style="left:17.300px;top:18.200px" width="13.600" height="11.200" viewBox="0 0 27.200 22.400"><path d="M9.500 4.500c3-1 5 .5 4.500 2.800 3.500-1.500 7.500-.5 7 3.200 2 .7 2.800 2.300 2.500 4C22.800 18.800 17.500 22 11.500 22 5.500 22 .5 19.300.5 15c0-3.500 4-8.800 9-10.500z" fill="#d5291d"/><ellipse cx="10.800" cy="15.300" rx="7" ry="4.900" transform="rotate(-8 10.800 15.300)" fill="#fff"/><ellipse cx="10" cy="15.800" rx="3.600" ry="3.100" fill="#1f1f1f"/><circle cx="11.500" cy="14.600" r="1" fill="#fff"/><path d="M18.500 5.200a3.300 3.300 0 0 1 3.600 3.600M17.800 1.200a7.600 7.600 0 0 1 8.200 8.600" fill="none" stroke="#f3a53a" stroke-width="2" stroke-linecap="round"/></svg><div class="nm" style="top:17.500px;font-size:10.600px">新浪微博</div></div>
    <div class="idp" style="left:917.8px;top:398.4px"><div class="ib"></div><svg class="abs" style="left:17.300px;top:17.200px" width="12.900" height="12.600" viewBox="0 0 16 16" fill="#16191d"><path d="M8 0C3.580 0 0 3.580 0 8c0 3.540 2.290 6.530 5.470 7.590.4.070.550-.170.550-.380 0-.190-.010-.820-.010-1.490-2.010.370-2.530-.490-2.690-.940-.090-.230-.480-.940-.820-1.130-.280-.150-.680-.520-.010-.530.630-.010 1.080.580 1.230.820.720 1.210 1.870.870 2.330.660.070-.520.280-.870.510-1.070-1.780-.2-3.640-.890-3.640-3.950 0-.870.310-1.590.820-2.150-.080-.2-.360-1.020.080-2.120 0 0 .670-.210 2.200.820.640-.180 1.320-.270 2-.270s1.360.090 2 .270c1.530-1.040 2.200-.820 2.200-.820.440 1.100.160 1.920.080 2.120.510.560.820 1.270.820 2.150 0 3.070-1.870 3.750-3.650 3.950.290.250.540.730.540 1.480 0 1.070-.010 1.930-.010 2.200 0 .210.150.460.550.380A8.013 8.013 0 0 0 16 8c0-4.420-3.580-8-8-8z"/></svg><div class="nm" style="top:17.300px;font-size:10.800px;letter-spacing:.2px">GitHub</div></div>
    <div class="idp" style="left:340.3px;top:457.3px"><div class="ib"></div><svg class="abs" style="left:18.400px;top:17.800px" width="11.200" height="11.600" viewBox="0 0 23 23" preserveAspectRatio="none"><rect width="23" height="23" rx="1.800" fill="#4267d8"/><path d="M15.800 23v-8.800h3l.45-3.500H15.800V8.500c0-1 .3-1.700 1.750-1.700h1.850V3.700c-.3-.05-1.400-.15-2.700-.15-2.700 0-4.500 1.650-4.500 4.650v2.500H9.200v3.500h3V23z" fill="#fff"/></svg><div class="nm" style="top:17.300px;font-size:10.800px;letter-spacing:.13px">Facebook</div></div>
    <div class="idp" style="left:532.8px;top:457.3px"><div class="ib"></div><svg class="abs" style="left:17.600px;top:18.500px" width="12.600" height="10.400" viewBox="0 0 24 20" preserveAspectRatio="none" fill="#5092e4"><path d="M24 2.400c-.9.400-1.800.65-2.800.8 1-.6 1.800-1.600 2.150-2.700-.95.550-2 .95-3.100 1.200A4.900 4.900 0 0 0 11.800 6.200C7.700 6 4.100 4 1.700 1c-.4.700-.65 1.600-.65 2.500 0 1.700.9 3.200 2.200 4.100-.8 0-1.550-.25-2.200-.6v.05c0 2.400 1.700 4.400 3.950 4.850-.4.100-.85.150-1.300.150-.3 0-.6-.05-.9-.1.600 1.950 2.450 3.400 4.600 3.400A9.900 9.900 0 0 1 0 17.500 14 14 0 0 0 7.550 19.700c9.050 0 14-7.500 14-14v-.65c.95-.7 1.800-1.550 2.450-2.550z"/></svg><div class="nm" style="top:17.300px;font-size:10.800px;letter-spacing:.42px">Twitter</div></div>
    <div class="idp" style="left:725.3px;top:457.3px"><div class="ib"></div><svg class="abs" style="left:17px;top:16.700px" width="13.800" height="13.800" viewBox="0 0 26 26"><circle cx="13" cy="13" r="13" fill="#b9211c"/><path d="M19.500 7.200H11a4.200 4.200 0 0 0-4.200 4.200v8a.65.650 0 0 0 .65.650h8.500a3.800 3.800 0 0 0 3.800-3.800v-3.700a.65.650 0 0 0-.65-.65h-6a.65.650 0 0 0-.65.650v1.600c0 .35.300.65.650.65h3.500c.35 0 .65.300.65.650v.3a1.900 1.900 0 0 1-1.900 1.900h-4.900a.65.650 0 0 1-.65-.65v-5a1.900 1.900 0 0 1 1.900-1.900h8.450c.35 0 .65-.3.650-.65V7.850a.65.650 0 0 0-.65-.65z" fill="#fff"/></svg><div class="nm" style="top:17.300px;font-size:10.800px;letter-spacing:.08px">Gitee</div></div>
    <div class="idp" style="left:340.3px;top:536.1px"><div class="ib"><i style="background:#4f8ef7"></i></div><svg class="abs" style="left:17.800px;top:17.800px" width="11.600" height="11.600" viewBox="0 0 23 23" fill="none" stroke="#fff" stroke-width="2.600"><path d="M1.300 8V1.300H8M15 1.300h6.700V8M21.700 15v6.700H15M8 21.700H1.300V15" stroke-opacity=".95"/><path d="M0 11.500h23" stroke-width="3.200" stroke-opacity=".8"/></svg><div class="nm" style="font-size:10.500px">企业微信自建应用扫码</div></div>
    <div class="idp" style="left:532.8px;top:536.1px"><div class="ib"><i style="background:#4f8ef7"></i></div><svg class="abs" style="left:17.800px;top:17.800px" width="11.600" height="11.600" viewBox="0 0 23 23" fill="none" stroke="#fff" stroke-width="2.600"><path d="M1.300 8V1.300H8M15 1.300h6.700V8M21.700 15v6.700H15M8 21.700H1.300V15" stroke-opacity=".95"/><path d="M0 11.500h23" stroke-width="3.200" stroke-opacity=".8"/></svg><div class="nm" style="font-size:10.550px">飞书应用商店应用</div></div>
    <svg class="abs" style="left:470.300px;top:418.3px" width="8.600" height="8.600" viewBox="0 0 17.200 17.200"><circle cx="8.600" cy="8.600" r="7.400" fill="none" stroke="#6283f1" stroke-width="1.500"/><path d="M4.800 8.600h7.600" stroke="#6283f1" stroke-width="1.500"/></svg>
    <div class="t" style="left:482px;top:416.6px;font-size:9.400px;line-height:12px;color:#6a8bf2">移除</div>
    <div class="abs" style="left:453.900px;top:400.9px;width:64.100px;height:40.700px;border:3.400px solid #ca2c1b;border-radius:1.200px"></div>
    <div class="abs" style="left:70px;top:625.0px;width:1140px;height:37px;background:linear-gradient(to bottom,rgba(30,30,40,0) 0,rgba(30,30,40,.012) 25%,rgba(30,30,40,.045) 55%,rgba(30,30,40,.135) 100%);-webkit-mask-image:linear-gradient(to right,transparent 0,#000 13%,#000 87%,transparent 100%);mask-image:linear-gradient(to right,transparent 0,#000 13%,#000 87%,transparent 100%)"></div>
  </div>
</div>
</body>
</html>
